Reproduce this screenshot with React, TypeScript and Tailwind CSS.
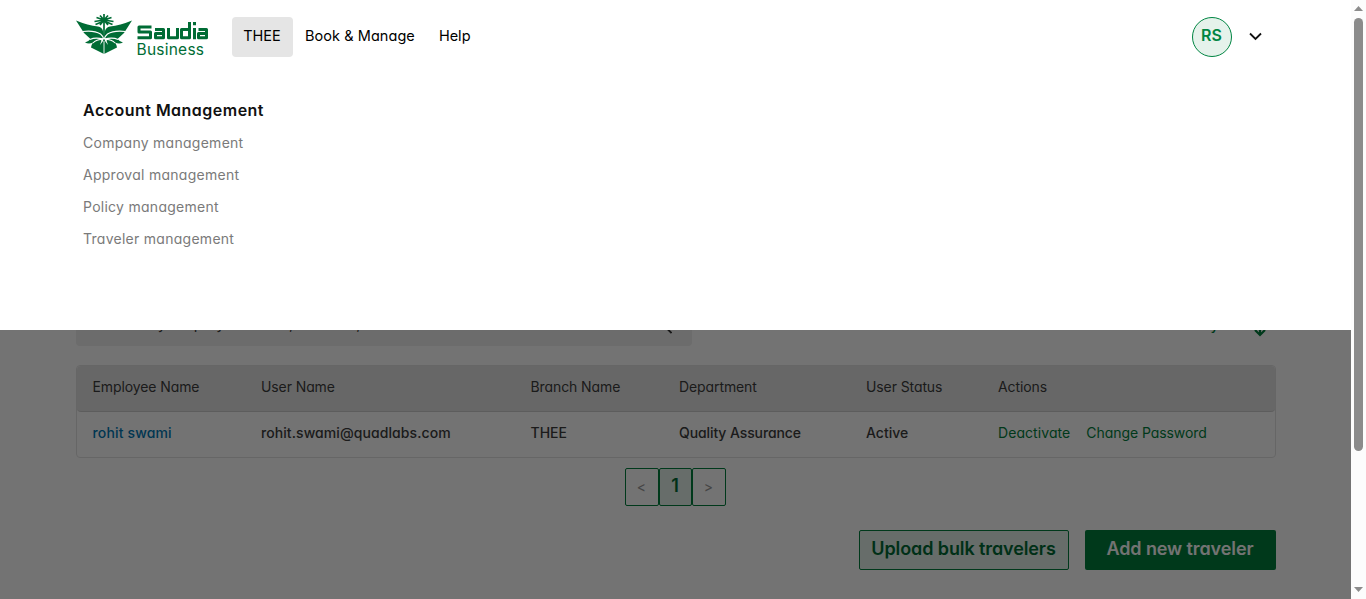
import React from "react";

function Wing() {
  return (
    <g>
      <path d="M0 7.500Q12 12.500 22 13.500Q26 14 27 18L28 24V41Q22 38 15 34.500Q15.500 31.500 17 29.500Q13 31.500 9 29.500Q12.500 28.500 14.500 26L8 20Z" />
      <path d="M6.500 18.500Q18 17 24.500 21Q27 23 27.500 26M17 30Q20 26.500 27.500 26M14 26.500Q19 24 27.500 26" fill="none" stroke="#fff" strokeWidth="1.100" />
      <path d="M28 24L27 28L24 32L25.500 27.500L22 26H26Z" fill="#fff" />
    </g>
  );
}

function Logo() {
  return (
    <svg width="136" height="46" viewBox="0 0 136 46" fill="#006c35">
      <Wing />
      <g transform="matrix(-1 0 0 1 56 0)"><Wing /></g>
      <path d="M28 28V41" stroke="#fff" strokeWidth="0.900" />
      <path d="M28 8L19.500 11.500M28 7L18.500 8.500M28 7L20.500 4.500M28 7L24 2.500M28 7V1M28 7L32 2.500M28 7L35.500 4.500M28 7L37.500 8.500M28 8L36.500 11.500M28 7L24 12M28 7L32 12M28 6V23" fill="none" stroke="#006c35" strokeWidth="1.700" />
      <path d="M75.500 14H63V19H74.500V24.700H61.500M79 16.500H87.500V24.700H79.500V20.500H87M92.500 15V24.700H101.500V15M113.500 9V24.700H105.500V16.500H113M118.500 15V26.200M118.500 9V12.300M122.500 16.500H130.500V24.700H122.500V20.500H130" fill="none" stroke="#006c35" strokeWidth="3" strokeLinejoin="round" />
      <text x="60.500" y="41.500" fontSize="15.500" fontFamily="Inter, sans-serif" textLength="67.500">Business</text>
    </svg>
  );
}

const links = ["Company management", "Approval management", "Policy management", "Traveler management"];
const columns = "grid grid-cols-[168.500px_269.500px_148.500px_187px_132px_1fr] pl-4";

function Page() {
  return (
    <div className="flex h-full flex-col px-[75.5px] pt-[306px] text-[14px] text-[#3d3d3d]">
      <div className="flex h-10 items-center justify-between pr-2">
        <div className="flex h-10 w-[616px] items-center justify-between rounded-sm bg-[#efefef] pr-[19px] pl-4">
          <span className="pb-[3px] text-[15px] tracking-[0.35px]">Search by employee name, email id, user name</span>
          <svg width="16" height="16" viewBox="0 0 16 16" fill="none" stroke="#333" strokeWidth="1.800" className="mr-px mb-px"><circle cx="6" cy="5" r="4.500" /><path d="M9.500 9l6 6" /></svg>
        </div>
        <div className="flex items-center gap-[34px] font-medium text-[#007f3c]">
          <span className="pb-[3px]">Download directory</span>
          <svg width="14" height="18" viewBox="0 0 14 18" className="mt-1 mr-px" fill="none" stroke="currentColor" strokeWidth="2.200"><path d="M7 0v16M2 11l5 5 5-5" /></svg>
        </div>
      </div>
      <div className="mt-[19px] rounded-sm border border-[#e3e3e3]">
        <div className={`${columns} h-[46px] items-center rounded-sm border-b border-[#cfcfcf] bg-[#e5e5e5] pb-[5px] tracking-[-0.1px]`}>
          <span>Employee Name</span><span>User Name</span><span>Branch Name</span><span>Department</span><span>User Status</span><span>Actions</span>
        </div>
        <div className={`${columns} h-[45px] items-center pb-1 font-medium`}>
          <span className="tracking-[0.15px] text-[#0079b5]">rohit swami</span><span className="tracking-[0.08px]">rohit.swami@quadlabs.com</span><span>THEE</span><span className="tracking-[-0.1px]">Quality Assurance</span><span>Active</span>
          <span className="flex gap-4 font-normal text-[#007f3c]"><span className="tracking-[0.07px]">Deactivate</span><span className="tracking-[-0.06px]">Change Password</span></span>
        </div>
      </div>
      <div className="mt-[10px] ml-[549px] flex h-[38px] w-[101px]">
        <span className="flex w-[34px] items-center justify-center rounded-xs border border-[#007f3c] pb-px text-[#999]">&lt;</span>
        <span className="flex w-[33px] items-center justify-center rounded-xs border border-[#007f3c] bg-[#e5f2eb] pb-[3px] text-[18px] font-semibold text-[#006c35]">1</span>
        <span className="flex w-[34px] items-center justify-center rounded-xs border border-[#007f3c] pb-px text-[#999]">&gt;</span>
      </div>
      <div className="mt-6 flex justify-end gap-4 text-[18px] font-semibold tracking-[-0.1px]">
        <button className="h-10 w-[210px] rounded-xs border border-[#007f3c] bg-[#e5f2eb] pb-1 whitespace-nowrap text-[#006c35]">Upload bulk travelers</button>
        <button className="h-10 w-[191px] rounded-xs bg-[#007f3c] pb-1 whitespace-nowrap text-white">Add new traveler</button>
      </div>
    </div>
  );
}

export default function App() {
  return (
    <div className="flex h-[599px] w-[1366px] overflow-hidden bg-white font-['Inter',sans-serif] [font-feature-settings:'cv11']">
      <main className="relative h-full w-[1351px]">
        <Page />
        <div className="absolute inset-0 bg-black/55" />
        <div className="absolute inset-x-0 top-0 h-[330px] bg-white">
          <header className="flex h-[74px] items-center px-[76px] text-[14.500px] text-black">
            <div className="-mt-0.5"><Logo /></div>
            <nav className="ml-5 flex items-center">
              <span className="flex h-10 w-[61px] items-center justify-center rounded-sm bg-[#e5e5e5] pr-px pb-0.5">THEE</span>
              <span className="ml-3 pb-0.5 tracking-[0.06px]">Book &amp; Manage</span>
              <span className="ml-6 pb-0.5">Help</span>
            </nav>
            <span className="ml-auto flex h-10 w-10 items-center justify-center rounded-full border border-[#008542] bg-[#e5f2eb] pr-px pb-1 text-[16px] font-semibold text-[#008542]">RS</span>
            <svg className="mr-[13px] ml-[17px] -mt-px" width="13" height="9" viewBox="0 0 13 9" fill="none" stroke="#111" strokeWidth="1.800"><path d="M1 1.500l5.500 5.500L12 1.500" /></svg>
          </header>
          <section className="pt-[24px] pl-[83px]">
            <h2 className="text-[16px] leading-6 font-semibold tracking-[0.48px] text-[#111]">Account Management</h2>
            <ul className="mt-[5px] text-[14px] leading-8 tracking-[0.27px] text-[#7a7a7a]">
              {links.map((l) => <li key={l}>{l}</li>)}
            </ul>
          </section>
        </div>
      </main>
      <aside className="flex w-[15px] flex-col items-center bg-[#fcfcfc]">
        <svg width="9" height="18" viewBox="0 0 9 18" fill="#8b8b8b"><path d="M0 11l4.500-5L9 11z" /></svg>
        <div className="h-[433px] w-[9px] rounded-full bg-[#8b8b8b]" />
        <svg className="mt-auto" width="9" height="15" viewBox="0 0 9 15" fill="#8b8b8b"><path d="M0 3l4.500 5L9 3z" /></svg>
      </aside>
    </div>
  );
}
